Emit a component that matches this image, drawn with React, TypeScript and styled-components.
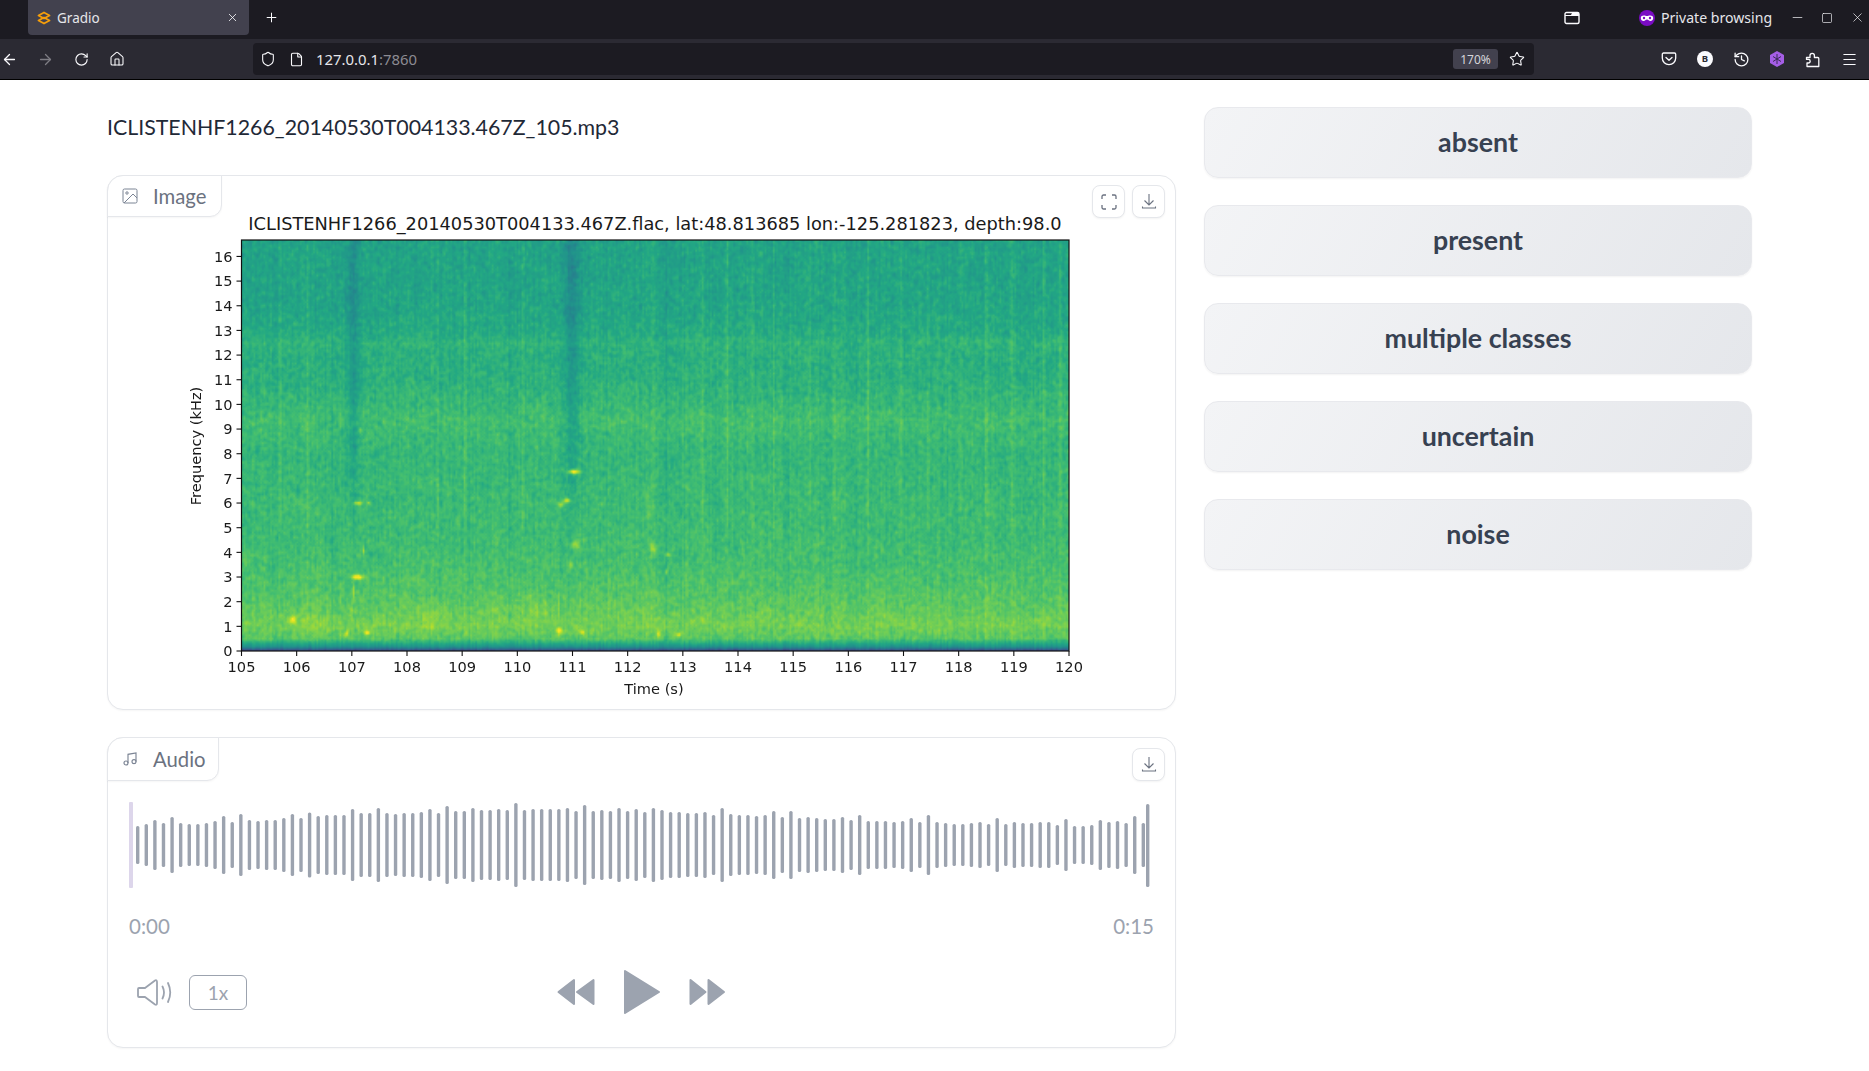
import React, { useEffect, useRef } from "react";
import styled, { createGlobalStyle } from "styled-components";
import { ArrowLeft, ArrowRight, RotateCw, House, Shield, File, Star, Menu, History, Plus, X, Minus, Square } from "lucide-react";

const Global = createGlobalStyle`
  html, body { margin: 0; padding: 0; background: #fff; }
  * { box-sizing: border-box; }
`;

const Page = styled.div`
  width: 1869px;
  height: 1071px;
  overflow: hidden;
  display: flex;
  flex-direction: column;
  font-family: "Lato", "Noto Sans", sans-serif;
  background: #fff;
`;

/* ---------- browser chrome ---------- */
const TabBar = styled.div`
  height: 39px;
  background: #1c1b22;
  display: flex;
  align-items: flex-start;
  padding-left: 28px;
  color: #fbfbfe;
  font-family: "Noto Sans", sans-serif;
`;
const Tab = styled.div`
  width: 221px;
  height: 35px;
  background: #42414e;
  border-radius: 0 0 4px 4px;
  display: flex;
  align-items: center;
  padding: 0 10px 0 9px;
  font-size: 13.5px;
  gap: 6px;
`;
const TabTitle = styled.span`
  flex: 1;
  color: #e6e6ea;
`;
const NewTab = styled.div`
  width: 44px;
  height: 35px;
  display: flex;
  align-items: center;
  justify-content: center;
`;
const BarSpacer = styled.div`
  flex: 1;
`;
const TabBarRight = styled.div`
  height: 35px;
  display: flex;
  align-items: center;
`;
const WindowIcon = styled.svg`
  width: 16px;
  height: 14px;
  margin-right: 59px;
`;
const PrivateLabel = styled.span`
  font-size: 14.1px;
  color: #e6e6ea;
  margin: 0 7px 0 6px;
  width: 111px;
  white-space: nowrap;
`;
const WindowButton = styled.div`
  width: 24px;
  margin-left: 6px;
  height: 20px;
  display: flex;
  align-items: center;
  justify-content: center;
`;
const Toolbar = styled.div`
  height: 41px;
  background: #2b2a33;
  border-bottom: 1px solid #000;
  display: flex;
  align-items: flex-start;
  padding-top: 4px;
  color: #fbfbfe;
  font-family: "Noto Sans", sans-serif;
`;
const NavGroup = styled.div`
  display: flex;
  width: 262px;
  margin-left: -9px;
  height: 32px;
  align-items: center;
`;
const NavSlot = styled.div<{ $dim?: boolean }>`
  width: 36px;
  display: flex;
  justify-content: center;
  color: ${(p) => (p.$dim ? "#7e7d84" : "#fbfbfe")};
`;
const UrlBar = styled.div`
  width: 1281px;
  height: 32px;
  background: #1c1b22;
  border-radius: 4px;
  display: flex;
  align-items: center;
  padding-left: 7px;
`;
const UrlIcons = styled.div`
  display: flex;
  align-items: center;
  gap: 13px;
  width: 56px;
`;
const UrlText = styled.div`
  flex: 1;
  font-size: 14.9px;
  color: #e6e6ea;
`;
const UrlPort = styled.span`
  color: #8c8b92;
`;
const ZoomBadge = styled.div`
  width: 45px;
  height: 20px;
  background: #42414e;
  border-radius: 3px;
  font-size: 12px;
  color: #d5d5da;
  display: flex;
  align-items: center;
  justify-content: center;
  margin-right: 11px;
`;
const StarSlot = styled.div`
  width: 25px;
  display: flex;
`;
const Extensions = styled.div`
  display: flex;
  align-items: center;
  height: 32px;
  padding-left: 117px;
`;
const ExtSlot = styled.div`
  width: 36px;
  display: flex;
  justify-content: center;
`;

/* ---------- content ---------- */
const Content = styled.div`
  flex: 1;
  display: flex;
  gap: 28px;
  padding: 27px 0 0 107px;
`;
const LeftColumn = styled.div`
  width: 1069px;
  display: flex;
  flex-direction: column;
`;
const FileName = styled.div`
  height: 39px;
  margin-bottom: 29px;
  display: flex;
  align-items: center;
  font-size: 21.35px;
  color: #1f2937;
  white-space: nowrap;
`;
const Card = styled.div`
  position: relative;
  border: 1px solid #e5e7eb;
  border-radius: 16px;
  box-shadow: 0 1px 2px rgba(0, 0, 0, 0.04);
  background: #fff;
`;
const ImageCard = styled(Card)`
  height: 535px;
`;
const AudioCard = styled(Card)`
  margin-top: 27px;
  height: 311px;
  padding: 64px 21px 0;
`;
const BlockLabel = styled.div<{ $w: number; $h: number }>`
  position: absolute;
  left: -1px;
  top: -1px;
  width: ${(p) => p.$w}px;
  height: ${(p) => p.$h}px;
  display: flex;
  align-items: center;
  gap: 15px;
  padding-left: 14px;
  border: 1px solid #e5e7eb;
  border-radius: 16px 0 12px 0;
  background: #fff;
  box-shadow: 0 1px 2px rgba(0, 0, 0, 0.04);
  font-size: 20.3px;
  color: #6b7280;
`;
const ActionRow = styled.div<{ $top: number }>`
  position: absolute;
  top: ${(p) => p.$top}px;
  right: 10px;
  display: flex;
  gap: 7px;
`;
const ActionButton = styled.div`
  width: 33px;
  height: 33px;
  border: 1px solid #e5e7eb;
  border-radius: 8px;
  background: #fff;
  box-shadow: 0 1px 2px rgba(0, 0, 0, 0.05);
  display: flex;
  align-items: center;
  justify-content: center;
  color: #6b7280;
`;
const PlotSvg = styled.svg`
  display: block;
  font-family: "DejaVu Sans", sans-serif;
`;
const HeatCanvas = styled.canvas`
  display: block;
  width: 100%;
  height: 100%;
`;
const WaveSvg = styled.svg`
  display: block;
`;
const TimeRow = styled.div`
  display: flex;
  justify-content: space-between;
  margin-top: 23px;
  height: 28px;
  align-items: center;
  font-size: 20.5px;
  color: #9ca3af;
`;
const ControlRow = styled.div`
  margin-top: 29px;
  height: 46px;
  display: grid;
  grid-template-columns: 1fr auto 1fr;
  align-items: center;
`;
const LeftControls = styled.div`
  display: flex;
  align-items: center;
  gap: 16px;
  padding-left: 8px;
`;
const SpeedButton = styled.div`
  width: 58px;
  height: 35px;
  border: 1px solid #9ca3af;
  border-radius: 6px;
  display: flex;
  align-items: center;
  justify-content: center;
  font-size: 19px;
  color: #9ca3af;
`;
const PlayControls = styled.div`
  display: flex;
  align-items: center;
`;
const RightColumn = styled.div`
  width: 548px;
  display: flex;
  flex-direction: column;
  gap: 27px;
`;
const LabelButton = styled.div`
  height: 71px;
  padding-bottom: 2px;
  border: 1px solid #e8e9ed;
  border-radius: 14px;
  background: linear-gradient(120deg, #f3f4f6, #e5e7eb);
  box-shadow: 0 1px 2px rgba(0, 0, 0, 0.05);
  display: flex;
  align-items: center;
  justify-content: center;
  font-size: 26.8px;
  font-weight: 700;
  color: #374151;
`;

/* ---------- spectrogram ---------- */
const VIRIDIS = [
  [68, 1, 84], [72, 36, 117], [65, 68, 135], [53, 95, 141], [42, 120, 142],
  [33, 145, 140], [34, 168, 132], [68, 191, 112], [122, 209, 81], [189, 223, 38], [253, 231, 37],
];
const viridis = (v: number) => {
  const c = Math.max(0, Math.min(0.9999, v)) * 10;
  const i = Math.floor(c);
  const t = c - i;
  return VIRIDIS[i].map((a, k) => a + (VIRIDIS[i + 1][k] - a) * t);
};
const BASE: [number, number][] = [
  [0, 0.18], [0.06, 0.3], [0.15, 0.48], [0.3, 0.6], [0.5, 0.74], [1, 0.79], [1.6, 0.76], [2.4, 0.725],
  [3.5, 0.7], [4.5, 0.685], [7, 0.67], [8, 0.66], [8.7, 0.675], [9.4, 0.695], [9.9, 0.67], [11, 0.635],
  [12.2, 0.63], [12.5, 0.65], [12.8, 0.615], [14, 0.59], [16.7, 0.58],
];
const baseAt = (f: number) => {
  for (let i = 1; i < BASE.length; i++) {
    if (f <= BASE[i][0]) {
      const [a, b] = BASE[i - 1];
      const [c, d] = BASE[i];
      return b + ((d - b) * (f - a)) / (c - a);
    }
  }
  return 0.58;
};
const BLOBS: number[][] = [
  [107.1, 3.0, 0.1, 0.1, 0.38], [107.1, 6.0, 0.09, 0.07, 0.28], [107.3, 6.0, 0.03, 0.06, 0.18],
  [111.02, 7.27, 0.1, 0.09, 0.4], [110.9, 6.1, 0.06, 0.09, 0.28], [110.78, 5.95, 0.05, 0.1, 0.22],
  [105.92, 1.25, 0.06, 0.15, 0.2], [106.9, 0.7, 0.03, 0.13, 0.25], [107.27, 0.75, 0.05, 0.08, 0.25],
  [110.75, 0.8, 0.05, 0.13, 0.22], [111.17, 0.75, 0.05, 0.08, 0.2], [112.55, 0.7, 0.04, 0.13, 0.2],
  [112.92, 0.65, 0.04, 0.09, 0.24], [112.45, 4.2, 0.06, 0.28, 0.16], [112.72, 3.9, 0.05, 0.08, 0.16],
  [112.7, 3.2, 0.025, 0.12, 0.2], [111.05, 4.3, 0.09, 0.22, 0.14], [110.97, 3.5, 0.05, 0.15, 0.14],
  [107.2, 4.1, 0.015, 0.22, 0.18], [107.02, 2.4, 0.015, 0.35, 0.16], [106.98, 1.6, 0.015, 0.35, 0.14],
  [105.1, 3.8, 0.1, 0.3, 0.07], [108.4, 1.3, 0.28, 0.5, 0.04], [106.2, 1.1, 0.3, 0.4, 0.03],
  [110.75, 1.9, 0.015, 0.5, 0.1], [112.38, 5.8, 0.03, 0.8, 0.07], [107.15, 8.95, 0.04, 0.1, 0.14],
  [110.3, 1.5, 0.3, 0.5, 0.03], [108.55, 6, 0.025, 1.2, 0.05], [112.7, 5.7, 0.015, 0.5, 0.06],
];
/* time, half-width, frequency where it fades in, strength */
const DARK: number[][] = [
  [107.02, 0.12, 7, 0.075], [107.0, 0.05, 2, 0.02], [111.0, 0.16, 7, 0.085], [110.95, 0.08, 3, 0.025],
  [106.63, 0.02, 0, 0.045], [108.6, 0.035, 0, 0.04], [112.7, 0.03, 0, 0.04], [112.95, 0.02, 0, 0.04],
  [109.85, 0.015, 0, 0.035], [107.83, 0.015, 0, 0.035], [111.6, 0.015, 0, 0.035], [113.6, 0.02, 0, 0.035],
  [105.6, 0.015, 0, 0.03], [114.9, 0.015, 0, 0.035], [116.15, 0.015, 0, 0.03], [117.7, 0.015, 0, 0.03],
];
const BRIGHT = [105.7, 106.2, 108.55, 109.05, 110.1, 112.45, 113.35, 113.8, 114.25, 114.65, 115.3, 115.75, 116.35, 116.95, 117.45, 118.05, 118.5, 118.95, 119.55, 119.85];

const Spectrogram = () => {
  const ref = useRef<HTMLCanvasElement>(null);
  useEffect(() => {
    const cv = ref.current;
    if (!cv) return;
    const W = 500;
    const H = 248;
    cv.width = W;
    cv.height = H;
    const ctx = cv.getContext("2d")!;
    const img = ctx.createImageData(W, H);
    let seed = 4711;
    const rnd = () => {
      seed = (seed * 1664525 + 1013904223) >>> 0;
      return seed / 4294967296;
    };
    const colNoise = Array.from({ length: W }, () => rnd() - 0.5);
    const coarse = Array.from({ length: 60 * 40 }, () => rnd() - 0.5);
    const coarseAt = (u: number, v: number) => {
      const x = u * 59;
      const y = v * 39;
      const xi = Math.min(58, Math.floor(x));
      const yi = Math.min(38, Math.floor(y));
      const a = x - xi;
      const b = y - yi;
      const g = (i: number, j: number) => coarse[j * 60 + i];
      return (g(xi, yi) * (1 - a) + g(xi + 1, yi) * a) * (1 - b) + (g(xi, yi + 1) * (1 - a) + g(xi + 1, yi + 1) * a) * b;
    };
    const noise = new Float32Array(W * H).map(() => rnd() - 0.5);
    const smooth = (x: number, y: number) => {
      const at = (i: number, j: number) => noise[Math.max(0, Math.min(H - 1, j)) * W + Math.max(0, Math.min(W - 1, i))];
      return (at(x, y) * 2 + at(x + 1, y) + at(x - 1, y) + at(x, y + 1) * 1.5 + at(x, y - 1) * 1.5) / 3.2;
    };
    const fade = (f: number, start: number) => {
      const k = Math.max(0, Math.min(1, (f - (start - 3)) / 6));
      return k * k * (3 - 2 * k);
    };
    for (let y = 0; y < H; y++) {
      const f = (1 - (y + 0.5) / H) * 16.67;
      for (let x = 0; x < W; x++) {
        const t = 105 + ((x + 0.5) / W) * 15;
        let v = baseAt(f);
        if (f > 0.4) {
          v += smooth(x, y) * 0.08 + coarseAt(x / W, y / H) * 0.022 + colNoise[x] * 0.035;
          for (const [c, w, fmin, a] of DARK) {
            const d = (t - c) / w;
            v -= a * Math.exp(-d * d) * (fmin > 0 ? fade(f, fmin) : 1);
          }
          const strength = f > 5 ? 0.055 : 0.018;
          for (const c of BRIGHT) {
            const d = (t - c) / 0.022;
            v += strength * Math.exp(-d * d);
          }
        } else {
          v += smooth(x, y) * 0.04 + colNoise[x] * 0.06;
        }
        for (const [bt, bf, st, sf, a] of BLOBS) {
          const dt = (t - bt) / st;
          const df = (f - bf) / sf;
          const e = dt * dt + df * df;
          if (e < 9) v += a * Math.exp(-e);
        }
        const [r, g, b] = viridis(v);
        const o = (y * W + x) * 4;
        img.data[o] = r;
        img.data[o + 1] = g;
        img.data[o + 2] = b;
        img.data[o + 3] = 255;
      }
    }
    ctx.putImageData(img, 0, 0);
  }, []);
  return <HeatCanvas ref={ref} />;
};

const PL = 133.5;
const PR = 961;
const PT = 64;
const PB = 475;
const X_TICKS = Array.from({ length: 16 }, (_, i) => 105 + i);
const Y_TICKS = Array.from({ length: 17 }, (_, i) => i);
const tx = (v: number) => PL + ((v - 105) / 15) * (PR - PL);
const ty = (v: number) => PB - v * 24.66;

const Plot = () => (
  <PlotSvg width={1067} height={533} viewBox="0 0 1067 533">
    <text x={547} y={53.5} textAnchor="middle" fontSize={17.8} fill="#1a1a1a">
      ICLISTENHF1266_20140530T004133.467Z.flac, lat:48.813685 lon:-125.281823, depth:98.0
    </text>
    <foreignObject x={PL} y={PT} width={PR - PL} height={PB - PT}>
      <Spectrogram />
    </foreignObject>
    <rect x={PL} y={PT} width={PR - PL} height={PB - PT} fill="none" stroke="#111" strokeWidth={1.2} />
    {X_TICKS.map((v) => (
      <g key={v}>
        <line x1={tx(v)} x2={tx(v)} y1={PB} y2={PB + 5} stroke="#111" strokeWidth={1.1} />
        <text x={tx(v)} y={PB + 21} textAnchor="middle" fontSize={14.6} fill="#1a1a1a">{v}</text>
      </g>
    ))}
    {Y_TICKS.map((v) => (
      <g key={v}>
        <line x1={PL - 5} x2={PL} y1={ty(v)} y2={ty(v)} stroke="#111" strokeWidth={1.1} />
        <text x={PL - 9} y={ty(v) + 5.3} textAnchor="end" fontSize={14.6} fill="#1a1a1a">{v}</text>
      </g>
    ))}
    <text x={546} y={518} textAnchor="middle" fontSize={14.6} fill="#1a1a1a">Time (s)</text>
    <text transform="translate(93 270) rotate(-90)" textAnchor="middle" fontSize={14.6} fill="#1a1a1a">Frequency (kHz)</text>
  </PlotSvg>
);

/* ---------- waveform ---------- */
const BARS = [
  38, 42, 50, 44, 56, 44, 42, 42, 44, 48, 58, 46, 62, 50, 48, 50, 50, 54, 62, 54, 65, 58, 60, 60, 60, 72, 64, 64, 74, 64,
  62, 64, 64, 66, 72, 64, 78, 68, 68, 74, 70, 70, 72, 70, 84, 70, 72, 72, 72, 72, 74, 68, 80, 68, 70, 68, 74, 68, 72, 66,
  74, 70, 66, 66, 64, 64, 66, 60, 74, 62, 60, 60, 58, 60, 68, 56, 68, 54, 56, 54, 52, 52, 56, 50, 60, 48, 48, 48, 46, 48,
  54, 46, 60, 46, 44, 42, 42, 44, 46, 42, 54, 42, 46, 44, 44, 46, 46, 40, 52, 38, 38, 40, 50, 46, 48, 44, 58, 44,
];
const Waveform = () => (
  <WaveSvg width={1025} height={87} viewBox="0 0 1025 87">
    <rect x={0} y={0} width={4} height={86} rx={1} fill="#ddd6eb" />
    {BARS.map((h, i) => (
      <rect key={i} x={7 + i * 8.595} y={43 - h / 2} width={3.4} height={h} rx={1.6} fill="#9ca3af" />
    ))}
    <rect x={1017} y={2} width={3.4} height={83} rx={1.6} fill="#9ca3af" />
  </WaveSvg>
);

/* ---------- icons ---------- */
const DownloadIcon = () => (
  <svg width="16" height="17" viewBox="0 0 16 17" fill="none" stroke="#6b7280" strokeWidth="1.1">
    <path d="M8 1v11M3.5 7.5 8 12l4.500-4.500M1.500 13.500v1.500h13v-1.500" />
  </svg>
);
const FullscreenIcon = () => (
  <svg width="16" height="16" viewBox="0 0 16 16" fill="none" stroke="#6b7280" strokeWidth="1.3">
    <path d="M1 5V2.500A1.500 1.500 0 0 1 2.500 1H5M11 1h2.500A1.500 1.500 0 0 1 15 2.500V5M15 11v2.500a1.500 1.500 0 0 1-1.500 1.500H11M5 15H2.500A1.500 1.500 0 0 1 1 13.500V11" />
  </svg>
);
const ImageIcon = () => (
  <svg width="16" height="16" viewBox="0 0 16 16" fill="none" stroke="#7b8494" strokeWidth="1">
    <rect x="1" y="1" width="14" height="14" rx="1.500" />
    <circle cx="5" cy="5" r="1.200" />
    <path d="M15 10 11 6 2 15" />
  </svg>
);
const MusicIcon = () => (
  <svg width="16" height="16" viewBox="0 0 24 24" fill="none" stroke="#7b8494" strokeWidth="1.700">
    <path d="M9 18V5l12-2v13" />
    <circle cx="6" cy="18" r="3" />
    <circle cx="18" cy="16" r="3" />
  </svg>
);
const VolumeIcon = () => (
  <svg width="36" height="27" viewBox="0 0 36 27" fill="none" stroke="#9ca3af" strokeWidth="1.800" strokeLinejoin="round" strokeLinecap="round">
    <path d="M1 10q0-1 1-1h6L18 1.500q2-1 2 1.500v21q0 2.500-2 1.500L8 18H2q-1 0-1-1z" />
    <path d="M25.500 7.500q3 6 0 12M31 4q4.500 9.500 0 19" />
  </svg>
);
const Rewind = () => (
  <svg width="38" height="28" viewBox="0 0 38 28" fill="#9ca3af" stroke="#9ca3af" strokeWidth="2" strokeLinejoin="round">
    <path d="M1.500 14 17 2v24zM20 14 36.500 2v24z" />
  </svg>
);
const Forward = () => (
  <svg width="38" height="28" viewBox="0 0 38 28" fill="#9ca3af" stroke="#9ca3af" strokeWidth="2" strokeLinejoin="round">
    <path d="M1.500 2 16.500 14 1.500 26zM19.500 2 35 14 19.500 26z" />
  </svg>
);
const Play = () => (
  <svg width="38" height="46" viewBox="0 0 38 46" fill="#9ca3af" stroke="#9ca3af" strokeWidth="2" strokeLinejoin="round">
    <path d="M2 2 36 23 2 44z" />
  </svg>
);
const PlayGap = styled.div`
  width: 28px;
`;

const GradioLogo = () => (
  <svg width="14" height="14" viewBox="0 0 14 14" fill="none" stroke="#f59e0b" strokeWidth="1.800" strokeLinejoin="round">
    <path d="M7 1.500 12.500 4.500 7 7.500 1.500 4.500z" />
    <path d="M7 6.500 12.500 9.500 7 12.500 1.500 9.500z" />
  </svg>
);
const PrivateIcon = () => (
  <svg width="16" height="16" viewBox="0 0 16 16">
    <circle cx="8" cy="8" r="8" fill="#7a0cc4" />
    <path d="M1.800 8c0-2 1.500-2.600 3-2.600 1.300 0 2 .7 3.200.7s1.900-.7 3.200-.7c1.500 0 3 .6 3 2.600 0 2-1.300 3-2.800 3C9.800 11 9.500 9.600 8 9.600S6.200 11 4.600 11C3.100 11 1.800 10 1.800 8z" fill="#fff" />
    <circle cx="5" cy="8" r="1.200" fill="#7a0cc4" />
    <circle cx="11" cy="8" r="1.200" fill="#7a0cc4" />
  </svg>
);
const PocketIcon = () => (
  <svg width="16" height="16" viewBox="0 0 16 16" fill="none" stroke="#fbfbfe" strokeWidth="1.300" strokeLinecap="round" strokeLinejoin="round">
    <path d="M2.500 2h11c.7 0 1.200.5 1.200 1.200V7c0 3.700-3 6.700-6.700 6.700S1.300 10.700 1.300 7V3.200C1.300 2.500 1.800 2 2.500 2z" />
    <path d="M5 6.500 8 9.300l3-2.800" />
  </svg>
);
const BadgeB = () => (
  <svg width="16" height="16" viewBox="0 0 16 16">
    <circle cx="8" cy="8" r="8" fill="#fbfbfe" />
    <text x="8" y="11.200" textAnchor="middle" fontSize="9.500" fontWeight="700" fontFamily="Noto Sans, sans-serif" fill="#2b2a33">B</text>
  </svg>
);
const HexIcon = () => (
  <svg width="16" height="16" viewBox="0 0 16 16">
    <path d="M8 0 15 4v8l-7 4-7-4V4z" fill="#a55ee6" />
    <path d="M8 3v10M4 5.500l8 5M12 5.500l-8 5" stroke="#3a2a55" strokeWidth="1" />
  </svg>
);
const PuzzleIcon = () => (
  <svg width="16" height="17" viewBox="0 0 16 17" fill="none" stroke="#fbfbfe" strokeWidth="1.300" strokeLinejoin="round">
    <path d="M1.500 6.500h3.500v-2a2.200 2.200 0 0 1 4.400 0v2h3.400q1 0 1 1v8h-11.800v-3.500h1.400a1.800 1.800 0 0 0 0-3.600H1.500z" />
  </svg>
);

const App = () => (
  <Page>
    <Global />
    <TabBar>
      <Tab>
        <GradioLogo />
        <TabTitle>Gradio</TabTitle>
        <X size={13} strokeWidth={1.5} />
      </Tab>
      <NewTab>
        <Plus size={15} strokeWidth={1.6} />
      </NewTab>
      <BarSpacer />
      <TabBarRight>
        <WindowIcon viewBox="0 0 16 14" fill="none" stroke="#fbfbfe" strokeWidth="1.400">
          <rect x="1" y="1.500" width="14" height="11" rx="1.500" />
          <path d="M1 4h6l1-2h7v3H1z" fill="#fbfbfe" stroke="none" />
        </WindowIcon>
        <PrivateIcon />
        <PrivateLabel>Private browsing</PrivateLabel>
        <WindowButton><Minus size={15} strokeWidth={1.1} /></WindowButton>
        <WindowButton><Square size={12} strokeWidth={1.3} /></WindowButton>
        <WindowButton><X size={15} strokeWidth={1.1} /></WindowButton>
      </TabBarRight>
    </TabBar>
    <Toolbar>
      <NavGroup>
        <NavSlot><ArrowLeft size={17} strokeWidth={1.8} /></NavSlot>
        <NavSlot $dim><ArrowRight size={17} strokeWidth={1.8} /></NavSlot>
        <NavSlot><RotateCw size={15} strokeWidth={1.8} /></NavSlot>
        <NavSlot><House size={16} strokeWidth={1.6} /></NavSlot>
      </NavGroup>
      <UrlBar>
        <UrlIcons>
          <Shield size={16} strokeWidth={1.6} />
          <File size={15} strokeWidth={1.8} />
        </UrlIcons>
        <UrlText>127.0.0.1<UrlPort>:7860</UrlPort></UrlText>
        <ZoomBadge>170%</ZoomBadge>
        <StarSlot><Star size={16} strokeWidth={1.6} /></StarSlot>
      </UrlBar>
      <Extensions>
        <ExtSlot><PocketIcon /></ExtSlot>
        <ExtSlot><BadgeB /></ExtSlot>
        <ExtSlot><History size={17} strokeWidth={1.8} /></ExtSlot>
        <ExtSlot><HexIcon /></ExtSlot>
        <ExtSlot><PuzzleIcon /></ExtSlot>
        <ExtSlot><Menu size={17} strokeWidth={1.5} /></ExtSlot>
      </Extensions>
    </Toolbar>
    <Content>
      <LeftColumn>
        <FileName>ICLISTENHF1266_20140530T004133.467Z_105.mp3</FileName>
        <ImageCard>
          <BlockLabel $w={115} $h={42}><ImageIcon />Image</BlockLabel>
          <ActionRow $top={9}>
            <ActionButton><FullscreenIcon /></ActionButton>
            <ActionButton><DownloadIcon /></ActionButton>
          </ActionRow>
          <Plot />
        </ImageCard>
        <AudioCard>
          <BlockLabel $w={112} $h={44}><MusicIcon />Audio</BlockLabel>
          <ActionRow $top={10}>
            <ActionButton><DownloadIcon /></ActionButton>
          </ActionRow>
          <Waveform />
          <TimeRow><span>0:00</span><span>0:15</span></TimeRow>
          <ControlRow>
            <LeftControls>
              <VolumeIcon />
              <SpeedButton>1x</SpeedButton>
            </LeftControls>
            <PlayControls>
              <Rewind />
              <PlayGap />
              <Play />
              <PlayGap />
              <Forward />
            </PlayControls>
            <span />
          </ControlRow>
        </AudioCard>
      </LeftColumn>
      <RightColumn>
        {["absent", "present", "multiple classes", "uncertain", "noise"].map((l) => (
          <LabelButton key={l}>{l}</LabelButton>
        ))}
      </RightColumn>
    </Content>
  </Page>
);

export default App;
